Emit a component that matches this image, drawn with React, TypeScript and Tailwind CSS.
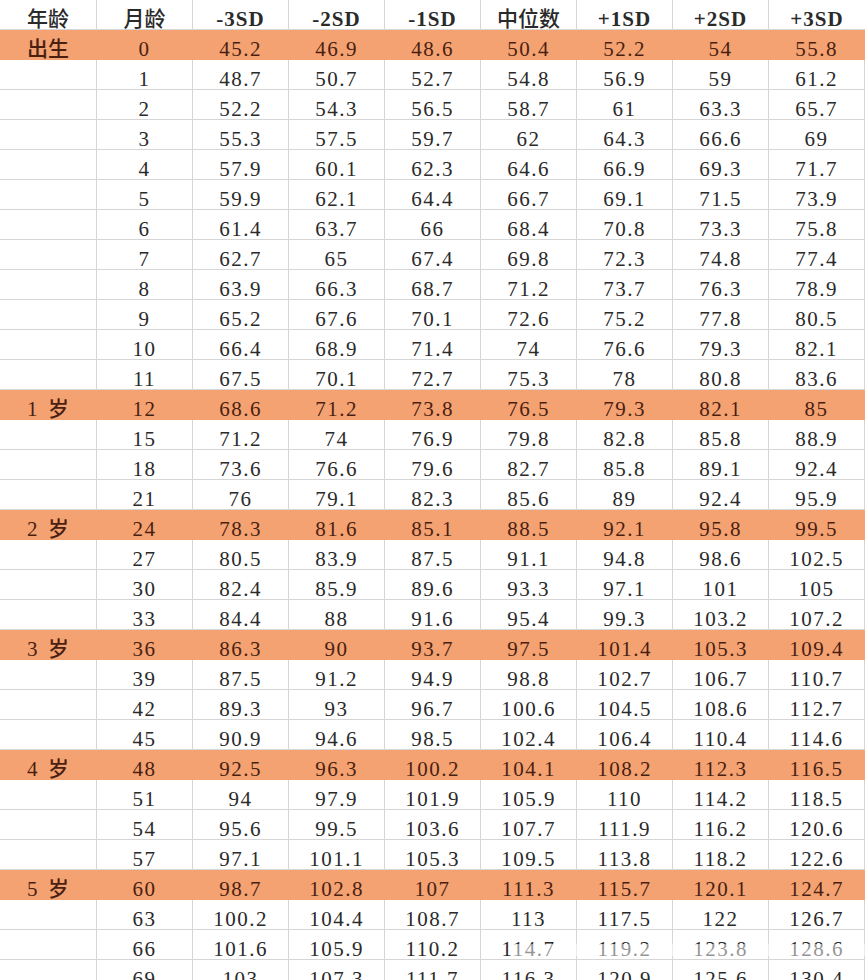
const header = ["年龄", "月龄", "-3SD", "-2SD", "-1SD", "中位数", "+1SD", "+2SD", "+3SD"];

const rows: string[][] = [
  ["出生", "0", "45.2", "46.9", "48.6", "50.4", "52.2", "54", "55.8"],
  ["", "1", "48.7", "50.7", "52.7", "54.8", "56.9", "59", "61.2"],
  ["", "2", "52.2", "54.3", "56.5", "58.7", "61", "63.3", "65.7"],
  ["", "3", "55.3", "57.5", "59.7", "62", "64.3", "66.6", "69"],
  ["", "4", "57.9", "60.1", "62.3", "64.6", "66.9", "69.3", "71.7"],
  ["", "5", "59.9", "62.1", "64.4", "66.7", "69.1", "71.5", "73.9"],
  ["", "6", "61.4", "63.7", "66", "68.4", "70.8", "73.3", "75.8"],
  ["", "7", "62.7", "65", "67.4", "69.8", "72.3", "74.8", "77.4"],
  ["", "8", "63.9", "66.3", "68.7", "71.2", "73.7", "76.3", "78.9"],
  ["", "9", "65.2", "67.6", "70.1", "72.6", "75.2", "77.8", "80.5"],
  ["", "10", "66.4", "68.9", "71.4", "74", "76.6", "79.3", "82.1"],
  ["", "11", "67.5", "70.1", "72.7", "75.3", "78", "80.8", "83.6"],
  ["1 岁", "12", "68.6", "71.2", "73.8", "76.5", "79.3", "82.1", "85"],
  ["", "15", "71.2", "74", "76.9", "79.8", "82.8", "85.8", "88.9"],
  ["", "18", "73.6", "76.6", "79.6", "82.7", "85.8", "89.1", "92.4"],
  ["", "21", "76", "79.1", "82.3", "85.6", "89", "92.4", "95.9"],
  ["2 岁", "24", "78.3", "81.6", "85.1", "88.5", "92.1", "95.8", "99.5"],
  ["", "27", "80.5", "83.9", "87.5", "91.1", "94.8", "98.6", "102.5"],
  ["", "30", "82.4", "85.9", "89.6", "93.3", "97.1", "101", "105"],
  ["", "33", "84.4", "88", "91.6", "95.4", "99.3", "103.2", "107.2"],
  ["3 岁", "36", "86.3", "90", "93.7", "97.5", "101.4", "105.3", "109.4"],
  ["", "39", "87.5", "91.2", "94.9", "98.8", "102.7", "106.7", "110.7"],
  ["", "42", "89.3", "93", "96.7", "100.6", "104.5", "108.6", "112.7"],
  ["", "45", "90.9", "94.6", "98.5", "102.4", "106.4", "110.4", "114.6"],
  ["4 岁", "48", "92.5", "96.3", "100.2", "104.1", "108.2", "112.3", "116.5"],
  ["", "51", "94", "97.9", "101.9", "105.9", "110", "114.2", "118.5"],
  ["", "54", "95.6", "99.5", "103.6", "107.7", "111.9", "116.2", "120.6"],
  ["", "57", "97.1", "101.1", "105.3", "109.5", "113.8", "118.2", "122.6"],
  ["5 岁", "60", "98.7", "102.8", "107", "111.3", "115.7", "120.1", "124.7"],
  ["", "63", "100.2", "104.4", "108.7", "113", "117.5", "122", "126.7"],
  ["", "66", "101.6", "105.9", "110.2", "114.7", "119.2", "123.8", "128.6"],
  ["", "69", "103", "107.3", "111.7", "116.3", "120.9", "125.6", "130.4"],
];

const grid = "grid grid-cols-[97px_repeat(8,96px)]";
const serif = "font-['Liberation_Serif','Noto_Sans_CJK_SC',serif]";
const cjk = "font-['Liberation_Serif','Noto_Sans_CJK_SC',sans-serif]";

export default function App() {
  return (
    <div className="relative h-[980px] w-[865px] overflow-hidden bg-white text-[#2a2a2a]">
      <div className={`${grid} h-[30px] border-b border-[#d6d6d6]`}>
        {header.map((h, i) => (
          <div
            key={h}
            className={`flex items-center justify-center border-r border-[#d6d6d6] pt-[4px] ${
              /[A-Z]/.test(h)
                ? `${serif} text-[21px] font-bold tracking-[1px]`
                : `${cjk} text-[21px] font-medium`
            } ${i === 8 ? "border-r-0" : ""}`}
          >
            {h}
          </div>
        ))}
      </div>

      {rows.map((row) => {
        const hi = row[0] !== "";
        return (
          <div
            key={row[1]}
            className={`${grid} h-[30px] border-b ${
              hi ? "border-[#f4a271] bg-[#f4a271] text-[#4a1f12]" : "border-[#d6d6d6]"
            }`}
          >
            {row.map((v, i) => (
              <div
                key={i}
                className={`flex items-center justify-center whitespace-pre border-r pt-[4px] ${
                  hi ? "border-[#f4a271]" : "border-[#d6d6d6]"
                } ${i === 0 ? `${cjk} text-[21px] font-medium` : `${serif} text-[21px] tracking-[1.5px]`}`}
              >
                {i === 0 ? v.replace(" ", "\u2002") : v}
              </div>
            ))}
          </div>
        );
      })}

      {/* faint watermark band over the lower right */}
      <div className="absolute left-[515px] top-[944px] h-[12px] w-[350px] bg-white/50" />
    </div>
  );
}
